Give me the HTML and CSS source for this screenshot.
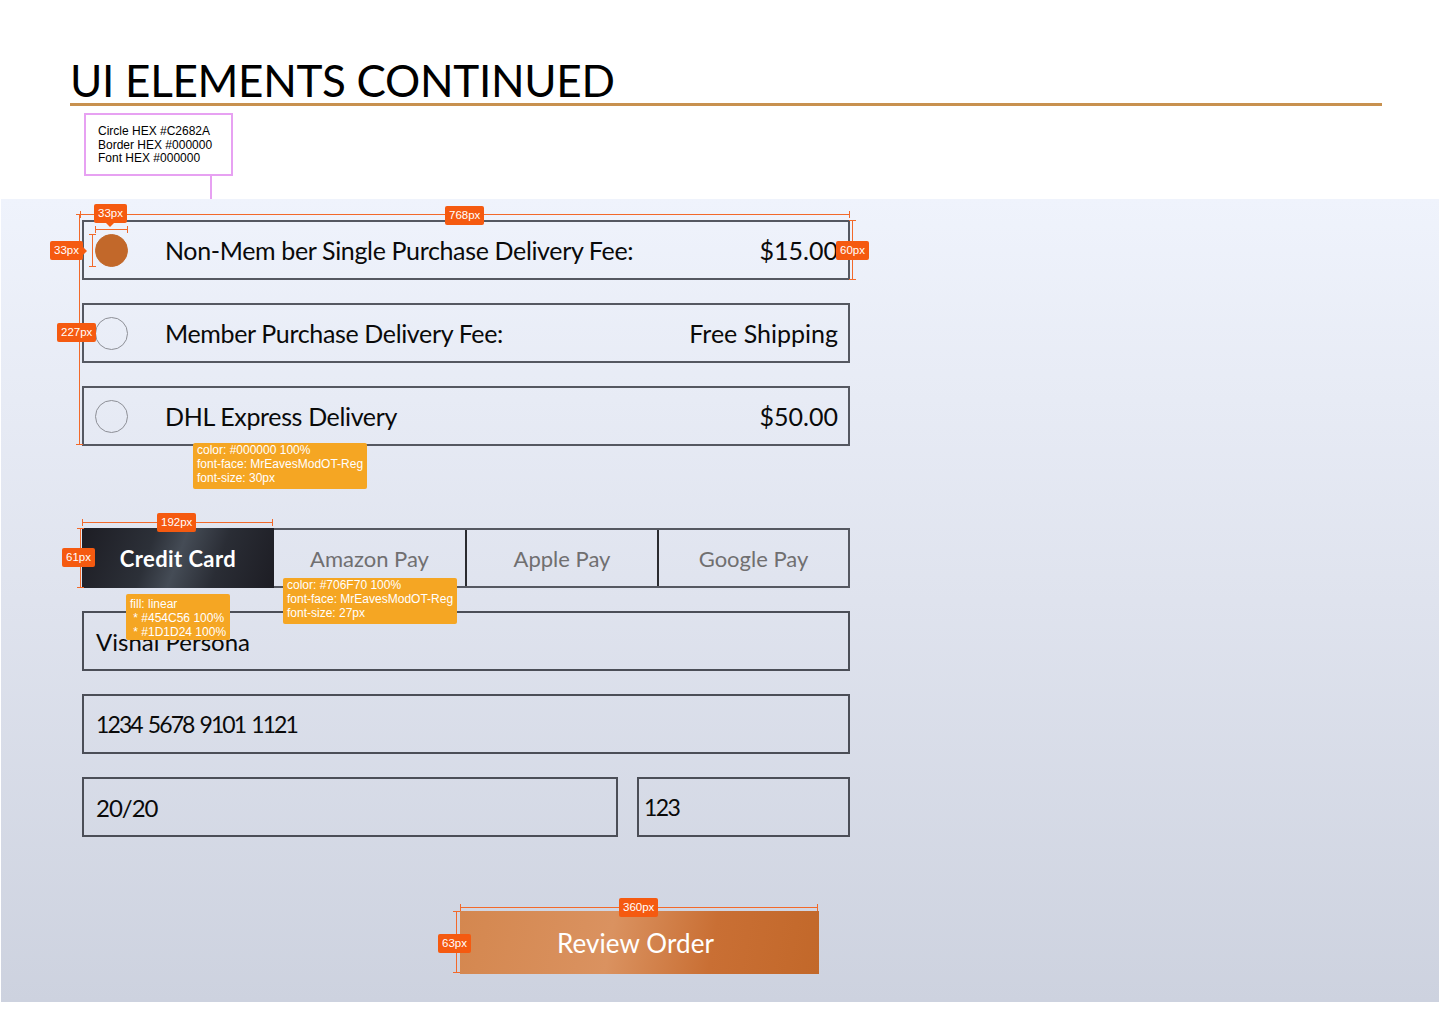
FILE: index.html
```html
<!DOCTYPE html>
<html lang="en">
<head>
<meta charset="utf-8">
<title>UI Elements Continued</title>
<link rel="stylesheet" href="styles.css">
</head>
<body>
<header class="page-header">
  <h1 class="title">UI ELEMENTS CONTINUED</h1>
  <div class="rule"></div>
  <div class="spec-note">
    <p>Circle HEX #C2682A</p>
    <p>Border HEX #000000</p>
    <p>Font HEX #000000</p>
  </div>
  <div class="spec-connector"></div>
</header>

<main class="panel">
  <section class="options">
    <div class="option">
      <span class="radio radio-on"></span>
      <span class="option-label">Non-Mem ber Single Purchase Delivery Fee:</span>
      <span class="option-price">$15.00</span>
    </div>
    <div class="option">
      <span class="radio"></span>
      <span class="option-label">Member Purchase Delivery Fee:</span>
      <span class="option-price">Free Shipping</span>
    </div>
    <div class="option">
      <span class="radio"></span>
      <span class="option-label">DHL Express Delivery</span>
      <span class="option-price">$50.00</span>
    </div>
  </section>

  <section class="payment">
    <div class="tabs">
      <div class="tab tab-active">Credit Card</div>
      <div class="tab">Amazon Pay</div>
      <div class="tab">Apple Pay</div>
      <div class="tab">Google Pay</div>
    </div>
    <div class="field">Vishal Persona</div>
    <div class="field field-num">1234 5678 9101 1121</div>
    <div class="field-row">
      <div class="field field-exp">20/20</div>
      <div class="field field-cvv">123</div>
    </div>
    <div class="actions">
      <button class="btn-review">Review Order</button>
    </div>
  </section>
</main>

<div class="annotations">
  <svg class="measure-lines" width="1440" height="1024" viewBox="0 0 1440 1024">
    <g stroke="#F2692A" stroke-width="1" fill="none">
      <path d="M80.5 214.5H849.5M80.5 211V218M849.5 211V218"/>
      <path d="M95 229.5H128M95.5 226V233M127.5 226V233"/>
      <path d="M92.5 234V267M89 234.5H96M89 266.5H96"/>
      <path d="M852.5 220V280M849 220.5H856M849 279.5H856"/>
      <path d="M79.5 214V445M76 214.5H83M76 444.5H83"/>
      <path d="M82 522.5H273M82.5 519V526M272.5 519V526"/>
      <path d="M80.5 528V588M77 528.5H84M77 587.5H84"/>
      <path d="M460 907.5H818M460.5 904V911M817.5 904V911"/>
      <path d="M456.5 911V973M453 911.5H460M453 972.5H460"/>
    </g>
  </svg>

  <span class="tag tag-down" style="left:94px;top:204px">33px</span>
  <span class="tag" style="left:445px;top:206px">768px</span>
  <span class="tag tag-right" style="left:50px;top:241px">33px</span>
  <span class="tag" style="left:836px;top:241px">60px</span>
  <span class="tag" style="left:57px;top:323px">227px</span>
  <span class="tag" style="left:157px;top:513px">192px</span>
  <span class="tag" style="left:62px;top:548px">61px</span>
  <span class="tag" style="left:619px;top:898px">360px</span>
  <span class="tag" style="left:438px;top:934px">63px</span>

  <div class="tip" style="left:193px;top:443px">
    <p>color: #000000 100%</p>
    <p>font-face: MrEavesModOT-Reg</p>
    <p>font-size: 30px</p>
  </div>
  <div class="tip" style="left:283px;top:578px">
    <p>color: #706F70 100%</p>
    <p>font-face: MrEavesModOT-Reg</p>
    <p>font-size: 27px</p>
  </div>
  <div class="tip tip-fill" style="left:126px;top:594px">
    <p>fill: linear</p>
    <p>&nbsp;* #454C56 100%</p>
    <p>&nbsp;* #1D1D24 100%</p>
  </div>
</div>
</body>
</html>
```

FILE: styles.css
```css
* { box-sizing: border-box; }

html, body {
  margin: 0;
  padding: 0;
}

body {
  position: relative;
  width: 1440px;
  height: 1024px;
  background: #ffffff;
  font-family: Lato, "Open Sans", sans-serif;
  color: #000;
  overflow: hidden;
}

p { margin: 0; }

/* ---------- header ---------- */
.page-header {
  position: relative;
  height: 199px;
  padding: 59px 58px 0 70px;
}

.title {
  margin: 0;
  font-family: Lato, sans-serif;
  font-weight: 400;
  font-size: 44px;
  line-height: 43px;
  letter-spacing: -0.3px;
  color: #000;
}

.rule {
  margin-top: 1px;
  height: 3px;
  background: #C8914F;
}

.spec-note {
  position: absolute;
  left: 84px;
  top: 113px;
  width: 149px;
  height: 63px;
  border: 2px solid #E7A1F2;
  background: #fff;
  padding: 10px 0 0 12px;
  font-family: "Liberation Sans", Arial, sans-serif;
  font-size: 12px;
  line-height: 13.5px;
  color: #000;
}

.spec-connector {
  position: absolute;
  left: 210px;
  top: 176px;
  width: 2px;
  height: 23px;
  background: #E7A1F2;
}

/* ---------- panel ---------- */
.panel {
  margin-left: 1px;
  width: 1438px;
  height: 803px;
  padding: 21px 0 0 81px;
  background: linear-gradient(180deg, #EFF3FC 0%, #DFE3EE 50%, #CDD2DF 100%);
}

.options {
  display: flex;
  flex-direction: column;
  gap: 23px;
  width: 768px;
}

.option {
  display: flex;
  align-items: center;
  height: 60px;
  border: 2px solid #555861;
  padding: 0 10px 0 11px;
}

.radio {
  flex: 0 0 33px;
  width: 33px;
  height: 33px;
  border-radius: 50%;
  border: 1.5px solid #8d8f96;
}

.radio-on {
  background: #C2682A;
  border-color: #C2682A;
}

.option-label {
  margin-left: 37px;
  font-size: 25px;
  letter-spacing: -0.35px;
  color: #0a0a0a;
}

.option-price {
  margin-left: auto;
  font-size: 25px;
  color: #0a0a0a;
}

/* ---------- payment ---------- */
.payment {
  width: 768px;
  margin-top: 82px;
  display: flex;
  flex-direction: column;
  gap: 23px;
}

.tabs {
  display: flex;
  height: 60px;
  border: 2px solid #555861;
  border-left: 0;
}

.tab {
  flex: 0 0 192px;
  display: flex;
  align-items: center;
  justify-content: center;
  font-size: 22px;
  color: #706F70;
  border-left: 2px solid #2a2b30;
}

.tab:nth-child(2) { border-left: 0; flex-basis: 191px; }
.tab:last-child { flex: 1 1 auto; }

.tab-active {
  margin: -2px 0;
  border-left: 0;
  background: linear-gradient(110deg, #1D1D24 0%, #2c3038 35%, #454C56 50%, #2a2d35 70%, #1D1D24 100%);
  color: #fff;
  font-weight: 700;
  letter-spacing: 0.4px;
}

.field {
  height: 60px;
  display: flex;
  align-items: center;
  padding-left: 12px;
  border: 2px solid #4b4e57;
  font-size: 24px;
  color: #0a0a0a;
}

.field-num {
  font-size: 23px;
  letter-spacing: -1.9px;
  word-spacing: 2px;
}

.field-row {
  display: flex;
  gap: 19px;
}

.field-exp { flex: 0 0 536px; letter-spacing: -1px; }
.field-cvv { flex: 1 1 auto; padding-left: 5px; font-size: 23px; letter-spacing: -1.6px; }

.actions {
  padding: 51px 0 0 378px;
}

.btn-review {
  display: block;
  width: 359px;
  height: 63px;
  border: 0;
  margin: 0;
  padding: 0 8px 0 0;
  background: linear-gradient(100deg, #D4874F 0%, #DA9260 42%, #C96F34 70%, #C2682A 100%);
  font-family: Lato, sans-serif;
  font-size: 26px;
  letter-spacing: 0.1px;
  color: #fff;
}

/* ---------- annotations (overlay) ---------- */
.annotations {
  position: absolute;
  left: 0;
  top: 0;
  width: 1440px;
  height: 1024px;
  pointer-events: none;
}

.measure-lines {
  position: absolute;
  left: 0;
  top: 0;
}

.tag {
  position: absolute;
  height: 19px;
  padding: 0 4px;
  border-radius: 2px;
  background: #F55A10;
  color: #fff;
  font-family: "Liberation Sans", Arial, sans-serif;
  font-size: 11.5px;
  line-height: 19px;
  white-space: nowrap;
}

.tag-down::after {
  content: "";
  position: absolute;
  left: 50%;
  bottom: -4px;
  margin-left: -4px;
  border: 4px solid transparent;
  border-bottom: 0;
  border-top-color: #F55A10;
}

.tag-right::after {
  content: "";
  position: absolute;
  top: 50%;
  right: -4px;
  margin-top: -4px;
  border: 4px solid transparent;
  border-right: 0;
  border-left-color: #F55A10;
}

.tip {
  position: absolute;
  padding: 0 4px 4px;
  background: #F5A623;
  border-radius: 2px;
  color: #fff;
  font-family: "Liberation Sans", Arial, sans-serif;
  font-size: 12px;
  line-height: 14px;
  white-space: nowrap;
}

.tip-fill { width: 104px; height: 46px; padding-top: 3px; }
```
